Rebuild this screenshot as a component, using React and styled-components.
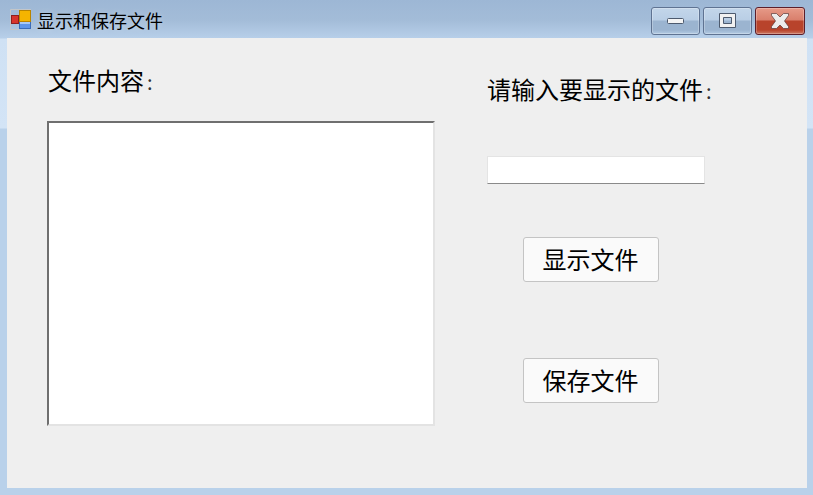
import React from "react";
import styled, { createGlobalStyle } from "styled-components";

const GlobalStyle = createGlobalStyle`
  html, body {
    margin: 0;
    padding: 0;
    background: #b9d1ea;
  }
`;

const cjk = `"Noto Sans CJK SC", "Liberation Sans", sans-serif`;

const Window = styled.div`
  width: 813px;
  height: 495px;
  display: flex;
  flex-direction: column;
  box-sizing: border-box;
  overflow: hidden;
  font-family: ${cjk};
  color: #000;
  background: linear-gradient(
    to bottom,
    #9db7d5 0,
    #a3bcd8 20px,
    #b7cfe9 38px,
    #cfe1f4 39px,
    #d3e4f6 128px,
    #b9d1ea 129px,
    #b9d1ea 100%
  );
`;

const TitleBar = styled.div`
  height: 38px;
  flex: none;
  display: flex;
  align-items: flex-start;
  justify-content: space-between;
  padding: 7px 8px 0 10px;
  box-sizing: border-box;
`;

const TitleGroup = styled.div`
  display: flex;
  align-items: flex-start;
  gap: 5px;
  margin-top: 2px;
`;

const TitleText = styled.span`
  font-size: 18px;
  line-height: 24px;
  margin-top: -1px;
  text-shadow: 0 0 6px rgba(255, 255, 255, 0.35);
`;

const Controls = styled.div`
  display: flex;
  gap: 3px;
`;

const CtrlButton = styled.div`
  width: ${(p) => (p.$close ? 50 : 49)}px;
  height: 28px;
  box-sizing: border-box;
  border-radius: 3px;
  display: flex;
  align-items: center;
  justify-content: center;
  border: 1px solid ${(p) => (p.$close ? "#5c1e2a" : "#5f7392")};
  box-shadow: inset 0 0 0 1px rgba(255, 255, 255, 0.25);
  background: ${(p) =>
    p.$close
      ? "linear-gradient(to bottom, #e69a88 0, #d97f6c 12px, #b8432b 13px, #b8432b 22px, #cc7a66 100%)"
      : "linear-gradient(to bottom, #c3d6ea 0, #b9cee5 12px, #9bb4d0 13px, #9bb4d0 22px, #b4cbe4 100%)"};
`;

const Client = styled.main`
  flex: 1;
  margin: 0 6px 7px 7px;
  background: #efefef;
  display: flex;
  align-items: flex-start;
  padding: 0 0 0 40px;
`;

const LeftColumn = styled.section`
  width: 388px;
  flex: none;
  display: flex;
  flex-direction: column;
`;

const RightColumn = styled.section`
  margin-left: 52px;
  width: 260px;
  display: flex;
  flex-direction: column;
`;

const Label = styled.div`
  font-size: 24px;
  line-height: 32px;
  height: 32px;
  white-space: nowrap;
  margin-top: ${(p) => p.$top}px;
  padding-left: ${(p) => p.$indent || 0}px;
`;

const Colon = styled.span`
  margin-left: 3px;
  font-size: 20px;
  color: #333;
`;

const ContentBox = styled.div`
  width: 388px;
  height: 305px;
  margin-top: 25px;
  box-sizing: border-box;
  background: #fff;
  border-style: solid;
  border-width: 2px;
  border-color: #6f6f6f #e3e3e3 #e3e3e3 #6f6f6f;
`;

const PathInput = styled.input`
  display: block;
  width: 218px;
  height: 28px;
  margin-top: 51px;
  padding: 0;
  box-sizing: border-box;
  background: #fff;
  border: 1px solid #e4e4e4;
  border-bottom-color: #8a8a8a;
  outline: none;
`;

const ActionButton = styled.button`
  width: 136px;
  height: 45px;
  margin-left: 36px;
  margin-top: ${(p) => p.$top}px;
  padding: 0 1px 2px 0;
  box-sizing: border-box;
  background: #fafafa;
  border: 1px solid #c4c4c4;
  border-radius: 3px;
  font-family: ${cjk};
  font-size: 24px;
  color: #000;
`;

const AppIcon = () => (
  <svg width="22" height="21" viewBox="0 0 22 21" style={{ display: "block" }}>
    <path d="M0.5 20.5V0.5H21" fill="none" stroke="#c4c6c8" />
    <path d="M0.5 20.5H9" fill="none" stroke="#c4c6c8" />
    <rect x="1.5" y="6.5" width="7" height="8" fill="#d8342c" stroke="#8f1f1f" />
    <rect x="9.5" y="1.5" width="11" height="11" fill="#f5b400" stroke="#b98400" />
    <rect x="9.5" y="13.5" width="11" height="6" fill="#5f95e8" stroke="#3b6cb8" />
    <rect x="10" y="13" width="10" height="2" fill="#a9c8f5" />
  </svg>
);

const MinIcon = () => (
  <svg width="18" height="7" viewBox="0 0 18 7">
    <rect x="0.5" y="0.5" width="16" height="5" rx="1" fill="#f4f4f4" stroke="#4d5a6e" />
  </svg>
);

const MaxIcon = () => (
  <svg width="18" height="16" viewBox="0 0 18 16">
    <path
      fillRule="evenodd"
      d="M0.5 0.5h16v14h-16zM4.5 4.5v6h8v-6z"
      fill="#f1f1f1"
      stroke="#4d5a6e"
    />
  </svg>
);

const CloseIcon = () => (
  <svg width="18" height="16" viewBox="0 0 18 16">
    <path
      d="M0.5 0.5h5l3.5 3.5 3.5-3.5h5v2l-4 5.5 4 5.5v2h-5l-3.5-3.5-3.5 3.5h-5v-2l4-5.5-4-5.5z"
      fill="#ececec"
      stroke="#5a3a3a"
      strokeWidth="0.7"
    />
  </svg>
);

export default function App() {
  return (
    <>
      <GlobalStyle />
      <Window>
        <TitleBar>
          <TitleGroup>
            <AppIcon />
            <TitleText>显示和保存文件</TitleText>
          </TitleGroup>
          <Controls>
            <CtrlButton><MinIcon /></CtrlButton>
            <CtrlButton><MaxIcon /></CtrlButton>
            <CtrlButton $close><CloseIcon /></CtrlButton>
          </Controls>
        </TitleBar>
        <Client>
          <LeftColumn>
            <Label $top={26} $indent={1}>文件内容<Colon>:</Colon></Label>
            <ContentBox />
          </LeftColumn>
          <RightColumn>
            <Label $top={35}>请输入要显示的文件<Colon>:</Colon></Label>
            <PathInput />
            <ActionButton $top={53}>显示文件</ActionButton>
            <ActionButton $top={76}>保存文件</ActionButton>
          </RightColumn>
        </Client>
      </Window>
    </>
  );
}
